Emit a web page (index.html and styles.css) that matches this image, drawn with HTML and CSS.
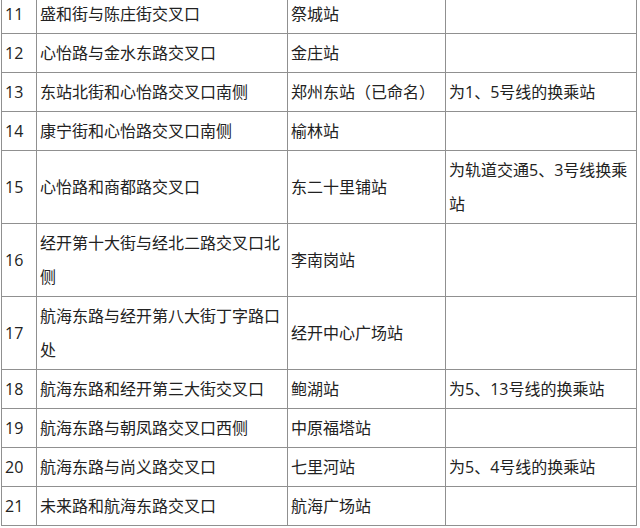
FILE: index.html
```html
<!DOCTYPE html>
<html lang="zh-CN">
<head>
<meta charset="utf-8">
<link rel="stylesheet" href="styles.css">
</head>
<body>
<table class="stations">
  <colgroup>
    <col class="c-no">
    <col class="c-loc">
    <col class="c-name">
    <col class="c-note">
  </colgroup>
  <tbody>
    <tr><td>11</td><td>盛和街与陈庄街交叉口</td><td>祭城站</td><td></td></tr>
    <tr><td>12</td><td>心怡路与金水东路交叉口</td><td>金庄站</td><td></td></tr>
    <tr><td>13</td><td>东站北街和心怡路交叉口南侧</td><td>郑州东站（已命名）</td><td>为1、5号线的换乘站</td></tr>
    <tr><td>14</td><td>康宁街和心怡路交叉口南侧</td><td>榆林站</td><td></td></tr>
    <tr><td>15</td><td>心怡路和商都路交叉口</td><td>东二十里铺站</td><td>为轨道交通5、3号线换乘站</td></tr>
    <tr><td>16</td><td>经开第十大街与经北二路交叉口北侧</td><td>李南岗站</td><td></td></tr>
    <tr><td>17</td><td>航海东路与经开第八大街丁字路口处</td><td>经开中心广场站</td><td></td></tr>
    <tr><td>18</td><td>航海东路和经开第三大街交叉口</td><td>鲍湖站</td><td>为5、13号线的换乘站</td></tr>
    <tr><td>19</td><td>航海东路与朝凤路交叉口西侧</td><td>中原福塔站</td><td></td></tr>
    <tr><td>20</td><td>航海东路与尚义路交叉口</td><td>七里河站</td><td>为5、4号线的换乘站</td></tr>
    <tr><td>21</td><td>未来路和航海东路交叉口</td><td>航海广场站</td><td></td></tr>
  </tbody>
</table>
</body>
</html>
```

FILE: styles.css
```css
html, body {
  margin: 0;
  padding: 0;
  background: #ffffff;
}

body {
  font-family: "Open Sans", "Noto Sans CJK SC", sans-serif;
  font-size: 16px;
  color: #222222;
  overflow: hidden;
}

.stations {
  border-collapse: collapse;
  table-layout: fixed;
  width: 636px;
  margin: -6px 0 0 1px;
}

.c-no { width: 35px; }
.c-loc { width: 251px; }
.c-name { width: 158px; }
.c-note { width: 191px; }

.stations td {
  border: 1px solid #909090;
  padding: 2px 2px 2px 3px;
  line-height: 34px;
  vertical-align: middle;
  word-break: break-all;
}
```
